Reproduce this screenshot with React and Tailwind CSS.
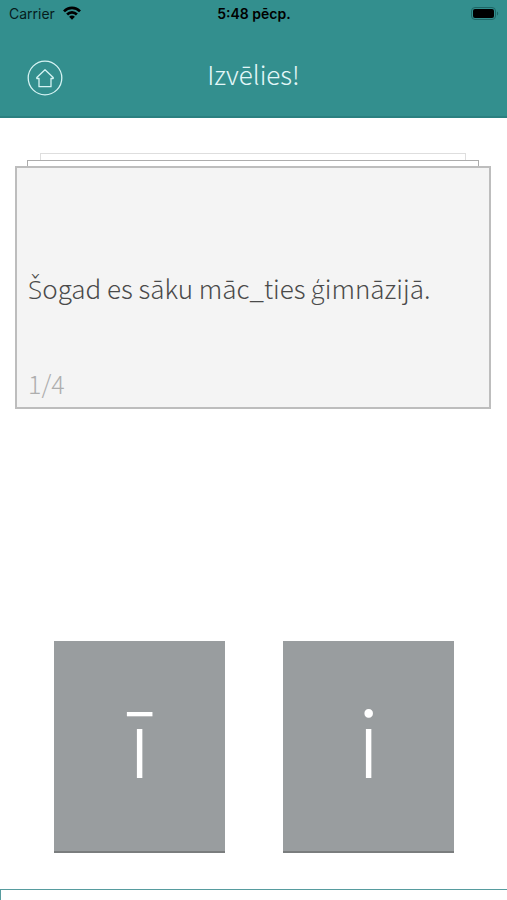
const display = "font-['Noto_Sans_CJK_JP','Open_Sans',sans-serif] font-light";

function StatusBar() {
  return (
    <div className="grid h-7 grid-cols-3 items-center pr-2 pl-[9px] font-['Inter','Liberation_Sans',sans-serif] text-sm leading-7 text-[#061c1c]">
      <div className="flex items-center gap-2">
        <span>Carrier</span>
        <svg className="-mt-0.5 h-4 w-[18px]" viewBox="0 0 18 16" fill="none" stroke="#000" strokeWidth="2.6" aria-label="Wi-Fi">
          <path d="M1 6.3C5.3 1.7 12.7 1.7 17 6.3" />
          <path d="M4.1 9.5C6.8 6.6 11.2 6.6 13.9 9.5" />
          <path d="M9 14.7L6.1 11.7C7.7 10.2 10.3 10.2 11.9 11.7Z" fill="#000" stroke="none" />
        </svg>
      </div>
      <span className="text-center font-semibold text-black">5:48 pēcp.</span>
      <svg className="h-4 w-7 justify-self-end" viewBox="0 0 28 16" aria-label="Battery">
        <rect x="0.5" y="1.5" width="24" height="12" rx="3.5" fill="none" stroke="#1d6665" />
        <rect x="2" y="3" width="21" height="9" rx="2" fill="#000" />
        <path d="M26 5.5v4c1.6-.5 1.6-3.500 0-4Z" fill="#1d6665" />
      </svg>
    </div>
  );
}

function AnswerButton({ children }) {
  return (
    <button
      type="button"
      className={`${display} flex h-[212px] flex-1 items-center justify-center border-b-2 border-[#7a7d7e] bg-[#999d9f] pb-4 text-[92px] leading-none text-white`}
    >
      {children}
    </button>
  );
}

export default function App() {
  return (
    <div className="flex min-h-screen flex-col bg-white">
      <header className="border-b-2 border-[#2b8080] bg-[#338f8e]">
        <StatusBar />
        <div className="grid h-[88px] grid-cols-[36px_1fr_36px] items-center px-[27px]">
          <button type="button" aria-label="Sākums" className="mt-3 size-9">
            <svg viewBox="0 0 36 36" fill="none" stroke="#d5f3f3" strokeWidth="1.300">
              <circle cx="18" cy="18" r="16.800" />
              <path d="M9.800 17.500L18 9.800l8.200 7.700v1H24v8.200H12v-8.200H9.800Z" strokeLinejoin="round" />
            </svg>
          </button>
          <h1 className={`${display} pt-1 text-center text-[26px] leading-9 text-[#e3f7f8]`}>Izvēlies!</h1>
        </div>
      </header>

      <main className="flex flex-1 flex-col">
        <section className="pt-[35px] pr-4 pl-[15px]">
          <div className="mx-[25px] h-[7px] border border-b-0 border-[#dedede]" />
          <div className="mx-3 h-[6px] border border-b-0 border-[#acacac]" />
          <article className={`${display} flex h-[243px] flex-col justify-between border-2 border-[#bdbdbd] bg-[#f4f4f4] px-[11px] pb-[6px] leading-9`}>
            <p className="pt-[102px] text-[26px] text-[#4a4a4a]">
              <span className="font-['Open_Sans','Noto_Sans',sans-serif]">Š</span>ogad es sāku māc_ties ģimnāzijā.
            </p>
            <p className="text-[25px] text-[#aeaeae]">1/4</p>
          </article>
        </section>
        <div className="mt-auto flex gap-[58px] pr-[53px] pb-9 pl-[54px]">
          <AnswerButton>ī</AnswerButton>
          <AnswerButton>i</AnswerButton>
        </div>
      </main>

      <footer className="h-[11px] border-t border-l border-[#579c9f] bg-white" />
    </div>
  );
}
